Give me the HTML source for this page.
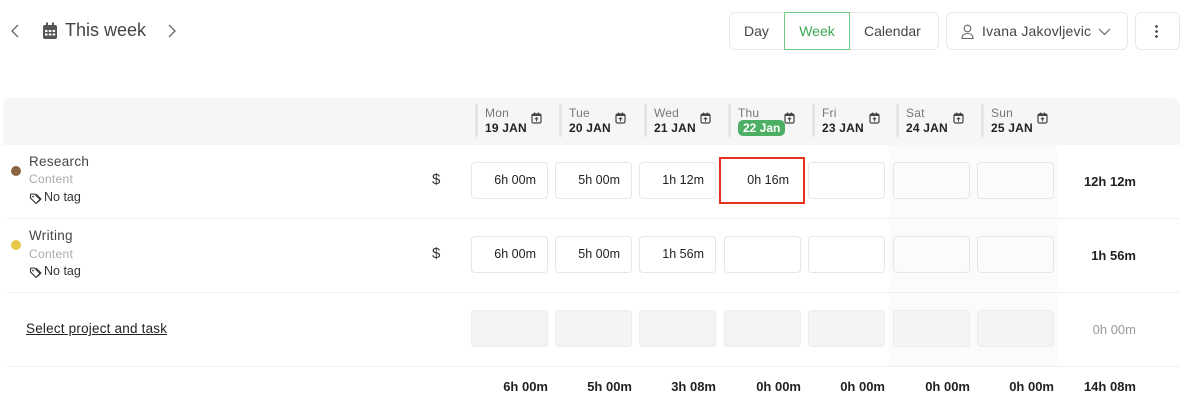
<!DOCTYPE html>
<html><head><meta charset="utf-8"><style>
*{margin:0;padding:0;box-sizing:border-box}
body{width:1185px;height:411px;background:#fff;font-family:"Liberation Sans",sans-serif;color:#333;position:relative;overflow:hidden}
.a{position:absolute}
.btn{position:absolute;top:12px;height:38px;border:1px solid #e8e8e8;border-radius:6px;font-size:14px;color:#444;display:flex;align-items:center;justify-content:center}
.sep{position:absolute;top:104px;width:3px;height:33px;background:#e4e4e4;border-radius:2px}
.dn{position:absolute;top:106px;font-size:12px;color:#777;letter-spacing:.2px}
.dd{position:absolute;top:121px;font-size:12px;font-weight:bold;color:#222;letter-spacing:.2px}
.cell{position:absolute;width:77px;height:37px;border:1px solid #e6e6e6;border-radius:4px;font-size:12.5px;color:#222;text-align:right;padding-right:11px;line-height:35px;background:#fff}
.cell.g{background:#f4f4f4;border-color:#ececec}
.tot{position:absolute;font-size:13px;font-weight:bold;color:#222;text-align:right;width:100px}
.hr{position:absolute;left:6px;width:1174px;height:1px;background:#f0f0f0}
</style></head><body>
<svg class="a" style="left:9px;top:23px" width="12" height="16" viewBox="0 0 12 16"><path d="M9 2L3 8l6 6" fill="none" stroke="#666" stroke-width="1.3"/></svg>
<svg class="a" style="left:42px;top:22px" width="16" height="18" viewBox="0 0 16 18"><rect x="1" y="3" width="14" height="14" rx="2" fill="#555"/><rect x="4" y="0.5" width="2" height="4" fill="#555"/><rect x="10" y="0.5" width="2" height="4" fill="#555"/><g fill="#fff"><rect x="3" y="8" width="2.5" height="2"/><rect x="6.8" y="8" width="2.5" height="2"/><rect x="10.6" y="8" width="2.5" height="2"/><rect x="3" y="11.5" width="2.5" height="2"/><rect x="6.8" y="11.5" width="2.5" height="2"/><rect x="10.6" y="11.5" width="2.5" height="2"/></g></svg>
<div class="a" style="left:65px;top:20px;font-size:18px;color:#444">This week</div>
<svg class="a" style="left:166px;top:23px" width="12" height="16" viewBox="0 0 12 16"><path d="M3 2l6 6-6 6" fill="none" stroke="#666" stroke-width="1.3"/></svg>

<div class="btn" style="left:729px;width:210px"></div>
<div class="a" style="left:744px;top:23px;font-size:14px;color:#444">Day</div>
<div class="btn" style="left:784px;width:66px;top:12px;border:1px solid #6fca83;border-radius:0;color:#3aa853">Week</div>
<div class="a" style="left:864px;top:23px;font-size:14px;color:#444">Calendar</div>
<div class="btn" style="left:946px;width:182px"></div>
<svg class="a" style="left:961px;top:24px" width="13" height="15" viewBox="0 0 13 15"><circle cx="6.5" cy="4.5" r="3.3" fill="none" stroke="#666" stroke-width="1.1"/><path d="M1 14.5c0-3.5 2.5-5 5.5-5s5.5 1.5 5.5 5z" fill="none" stroke="#666" stroke-width="1.1"/></svg>
<div class="a" style="left:982px;top:23px;font-size:14px;color:#444;letter-spacing:.2px">Ivana Jakovljevic</div>
<svg class="a" style="left:1098px;top:28px" width="13" height="8" viewBox="0 0 13 8"><path d="M1 1l5.5 5.5L12 1" fill="none" stroke="#666" stroke-width="1.2"/></svg>
<div class="btn" style="left:1135px;width:45px"></div>
<div class="a" style="left:1155px;top:24px;width:3px;height:14px;background:radial-gradient(circle,#555 1.3px,transparent 1.5px) 0 0/3px 5px"></div>

<div class="a" style="left:3px;top:98px;width:1177px;height:47px;background:#f6f6f6;border-radius:8px 8px 0 0"></div>
<div class="a" style="left:889px;top:145px;width:168px;height:221px;background:#fbfbfb"></div>

<div class="sep" style="left:475px"></div><div class="dn" style="left:485px">Mon</div><div class="dd" style="left:485px">19 JAN</div>
<div class="sep" style="left:559px"></div><div class="dn" style="left:569px">Tue</div><div class="dd" style="left:569px">20 JAN</div>
<div class="sep" style="left:644px"></div><div class="dn" style="left:654px">Wed</div><div class="dd" style="left:654px">21 JAN</div>
<div class="sep" style="left:728px"></div><div class="dn" style="left:738px">Thu</div><div class="a" style="left:738px;top:120px;height:16px;padding:0 5px;background:#4caf63;border-radius:5px;color:#fff;font-size:12px;font-weight:bold;line-height:16px">22 Jan</div>
<div class="sep" style="left:812px"></div><div class="dn" style="left:822px">Fri</div><div class="dd" style="left:822px">23 JAN</div>
<div class="sep" style="left:896px"></div><div class="dn" style="left:906px">Sat</div><div class="dd" style="left:906px">24 JAN</div>
<div class="sep" style="left:981px"></div><div class="dn" style="left:991px">Sun</div><div class="dd" style="left:991px">25 JAN</div>
<svg width="0" height="0" style="position:absolute"><defs><g id="ci"><rect x="1" y="2" width="9" height="9" rx="1.5" fill="none" stroke="#444" stroke-width="1.2"/><rect x="3" y="0.5" width="1.2" height="2.5" fill="#444"/><rect x="6.8" y="0.5" width="1.2" height="2.5" fill="#444"/><rect x="1" y="2" width="9" height="2" fill="#444"/><path d="M5.5 9.5V5.8M3.8 7.3l1.7-1.6 1.7 1.6" fill="none" stroke="#444" stroke-width="1"/></g></defs></svg>
<svg class="a" style="left:531px;top:112px" width="11" height="12"><use href="#ci"/></svg>
<svg class="a" style="left:615px;top:112px" width="11" height="12"><use href="#ci"/></svg>
<svg class="a" style="left:700px;top:112px" width="11" height="12"><use href="#ci"/></svg>
<svg class="a" style="left:784px;top:112px" width="11" height="12"><use href="#ci"/></svg>
<svg class="a" style="left:869px;top:112px" width="11" height="12"><use href="#ci"/></svg>
<svg class="a" style="left:953px;top:112px" width="11" height="12"><use href="#ci"/></svg>
<svg class="a" style="left:1037px;top:112px" width="11" height="12"><use href="#ci"/></svg>

<div class="hr" style="top:218px"></div><div class="hr" style="top:292px"></div><div class="hr" style="top:366px"></div>

<svg width="0" height="0" style="position:absolute"><defs><g id="tag"><path d="M1.5 2.5v3.5l5.5 5.5 4-4L5.5 2H2z" fill="none" stroke="#333" stroke-width="1.1"/><circle cx="4" cy="4.5" r="0.9" fill="#333"/><path d="M7 2l5 5-3.5 3.5" fill="none" stroke="#333" stroke-width="1"/></g></defs></svg>

<div class="a" style="left:11px;top:166px;width:10px;height:10px;border-radius:50%;background:#8a6440"></div>
<div class="a" style="left:29px;top:154px;font-size:13.5px;color:#444;letter-spacing:.3px">Research</div>
<div class="a" style="left:29px;top:172px;font-size:12px;color:#aaa;letter-spacing:.3px">Content</div>
<svg class="a" style="left:29px;top:192px" width="14" height="13"><use href="#tag"/></svg>
<div class="a" style="left:44px;top:190px;font-size:12.5px;color:#333">No tag</div>
<div class="a" style="left:432px;top:171px;font-size:15px;color:#333">$</div>

<div class="a" style="left:11px;top:240px;width:10px;height:10px;border-radius:50%;background:#e6c84a"></div>
<div class="a" style="left:29px;top:228px;font-size:13.5px;color:#444;letter-spacing:.3px">Writing</div>
<div class="a" style="left:29px;top:247px;font-size:12px;color:#aaa;letter-spacing:.3px">Content</div>
<svg class="a" style="left:29px;top:266px" width="14" height="13"><use href="#tag"/></svg>
<div class="a" style="left:44px;top:264px;font-size:12.5px;color:#333">No tag</div>
<div class="a" style="left:432px;top:245px;font-size:15px;color:#333">$</div>

<div class="a" style="left:26px;top:321px;font-size:13.5px;color:#222;text-decoration:underline;letter-spacing:.2px">Select project and task</div>

<div class="cell" style="left:471px;top:162px">6h 00m</div>
<div class="cell" style="left:555px;top:162px">5h 00m</div>
<div class="cell" style="left:639px;top:162px">1h 12m</div>
<div class="cell" style="left:719px;top:157px;width:86px;height:47px;border:2px solid #e8321e;border-radius:0;line-height:43px;padding-right:14px">0h 16m</div>
<div class="cell" style="left:808px;top:162px"></div>
<div class="cell" style="left:893px;top:162px;background:#fbfbfb"></div>
<div class="cell" style="left:977px;top:162px;background:#fbfbfb"></div>
<div class="tot" style="left:1036px;top:174px">12h 12m</div>

<div class="cell" style="left:471px;top:236px">6h 00m</div>
<div class="cell" style="left:555px;top:236px">5h 00m</div>
<div class="cell" style="left:639px;top:236px">1h 56m</div>
<div class="cell" style="left:724px;top:236px"></div>
<div class="cell" style="left:808px;top:236px"></div>
<div class="cell" style="left:893px;top:236px;background:#fbfbfb"></div>
<div class="cell" style="left:977px;top:236px;background:#fbfbfb"></div>
<div class="tot" style="left:1036px;top:248px">1h 56m</div>

<div class="cell g" style="left:471px;top:310px"></div>
<div class="cell g" style="left:555px;top:310px"></div>
<div class="cell g" style="left:639px;top:310px"></div>
<div class="cell g" style="left:724px;top:310px"></div>
<div class="cell g" style="left:808px;top:310px"></div>
<div class="cell g" style="left:893px;top:310px"></div>
<div class="cell g" style="left:977px;top:310px"></div>
<div class="tot" style="left:1036px;top:322px;font-weight:normal;color:#999">0h 00m</div>

<div class="tot" style="left:448px;top:379px">6h 00m</div>
<div class="tot" style="left:532px;top:379px">5h 00m</div>
<div class="tot" style="left:616px;top:379px">3h 08m</div>
<div class="tot" style="left:701px;top:379px">0h 00m</div>
<div class="tot" style="left:785px;top:379px">0h 00m</div>
<div class="tot" style="left:870px;top:379px">0h 00m</div>
<div class="tot" style="left:954px;top:379px">0h 00m</div>
<div class="tot" style="left:1036px;top:379px">14h 08m</div>
</body></html>
